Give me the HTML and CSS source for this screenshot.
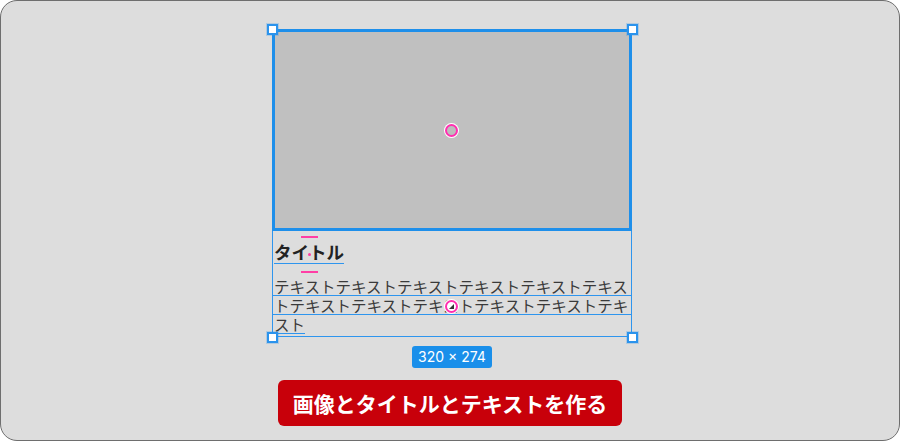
FILE: index.html
```html
<!DOCTYPE html>
<html lang="ja">
<head>
<meta charset="utf-8">
<link rel="stylesheet" href="styles.css">
</head>
<body>
<div class="frame">
  <div class="comp">
    <div class="image"></div>
    <div class="textarea">
      <div class="title-row"><span class="title">タイトル</span></div>
      <div class="body">
        <div class="line lined">テキストテキストテキストテキストテキストテキス</div>
        <div class="line lined">トテキストテキストテキストテキストテキストテキ</div>
        <div class="line"><span class="under">スト</span></div>
      </div>
      <span class="pink-bar bar-top"></span>
      <span class="pink-bar bar-bottom"></span>
      <span class="pink-dot"></span>
    </div>
    <span class="target target-img"></span>
    <span class="target target-text">
      <svg width="7" height="7" viewBox="0 0 7 7"><path d="M6 1 L6 6 L1 6 Z" fill="#333"/></svg>
    </span>
    <span class="handle h-tl"></span>
    <span class="handle h-tr"></span>
    <span class="handle h-bl"></span>
    <span class="handle h-br"></span>
  </div>
  <div class="size-label">320 × 274</div>
  <div class="button">画像とタイトルとテキストを作る</div>
</div>
</body>
</html>
```
FILE: styles.css
```css
html, body {
  margin: 0;
  padding: 0;
  background: #ffffff;
}
.frame {
  box-sizing: border-box;
  width: 900px;
  height: 441px;
  border: 1px solid #6e6e6e;
  border-radius: 17px;
  background: #dddddd;
  display: flex;
  flex-direction: column;
  align-items: center;
  padding-top: 28px;
  font-family: "Noto Sans CJK JP", "Noto Sans", sans-serif;
}
.comp {
  position: relative;
  width: 360px;
  margin-left: 4px;
}
.image {
  box-sizing: border-box;
  height: 202px;
  border: 3px solid #1e8fea;
  background: #c0c0c0;
}
.textarea {
  position: relative;
  box-sizing: border-box;
  border: 1px solid #2e95ee;
  border-top: none;
  padding: 9px 0 3px 1px;
}
.title-row {
  height: 24px;
}
.title {
  display: inline-block;
  font-size: 17.5px;
  font-weight: 700;
  line-height: 23px;
  color: #222222;
  border-bottom: 1px solid #2e95ee;
}
.body {
  margin-top: 13px;
  margin-left: -1px;
}
.line {
  height: 18px;
  line-height: 18px;
  font-size: 15.5px;
  color: #3a3a3a;
  white-space: nowrap;
  padding-left: 1px;
}
.lined {
  border-bottom: 1px solid #2e95ee;
}
.under {
  display: inline-block;
  line-height: 17px;
  border-bottom: 1px solid #2e95ee;
}
.pink-bar {
  position: absolute;
  left: 28px;
  width: 17px;
  height: 2px;
  background: #ff3ea5;
}
.bar-top { top: 5px; }
.bar-bottom { top: 40px; }
.pink-dot {
  position: absolute;
  left: 35px;
  top: 22px;
  width: 3px;
  height: 3px;
  border-radius: 50%;
  background: #ff3ea5;
}
.target {
  position: absolute;
  box-sizing: border-box;
  width: 13px;
  height: 13px;
  border-radius: 50%;
  border: 2px solid #ff2fb0;
  box-shadow: 0 0 0 1px #ffffff;
  display: flex;
  align-items: center;
  justify-content: center;
}
.target-img {
  left: 173px;
  top: 95px;
  background: #bdbdbd;
}
.target-text {
  left: 173px;
  top: 271px;
  background: #ffffff;
}
.handle {
  position: absolute;
  box-sizing: border-box;
  width: 11px;
  height: 11px;
  background: #ffffff;
  border: 2px solid #2b93ec;
  box-shadow: 0 0 0 1px rgba(43, 147, 236, 0.25);
}
.h-tl { left: -5px; top: -5px; }
.h-tr { right: -6px; top: -5px; }
.h-bl { left: -5px; bottom: -6px; }
.h-br { right: -6px; bottom: -6px; }
.size-label {
  margin-top: 9px;
  margin-left: 4px;
  height: 22px;
  line-height: 22px;
  padding: 0 6px;
  border-radius: 3px;
  background: #1a8fea;
  color: #ffffff;
  font-family: "Inter", "Roboto", sans-serif;
  font-size: 14px;
}
.button {
  margin-top: 12px;
  width: 344px;
  height: 46px;
  line-height: 46px;
  text-align: center;
  border-radius: 6px;
  background: #c8000a;
  color: #ffffff;
  font-size: 21px;
  font-weight: 700;
}
```
